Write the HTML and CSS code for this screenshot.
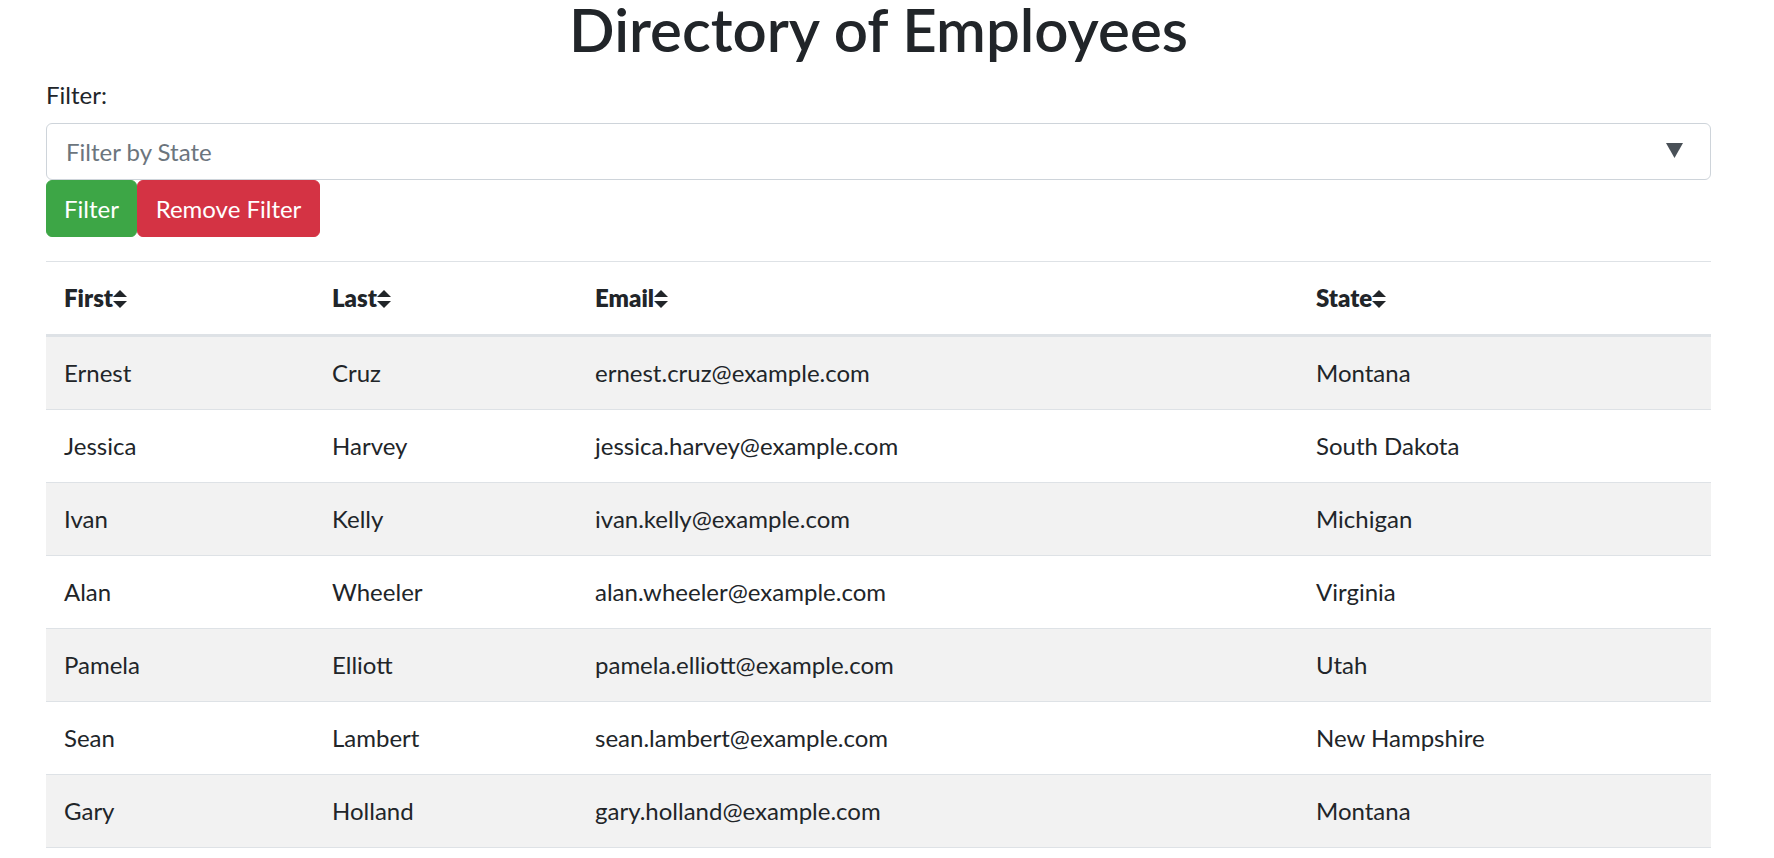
FILE: index.html
```html
<!DOCTYPE html>
<html lang="en">
<head>
<meta charset="utf-8">
<title>Directory of Employees</title>
<link rel="stylesheet" href="styles.css">
</head>
<body>
<div class="container">
  <h1 class="title">Directory of Employees</h1>
  <label class="filter-label">Filter:</label>
  <div class="select">
    <span class="placeholder">Filter by State</span>
    <svg class="caret" width="17" height="15" viewBox="0 0 17 15"><polygon points="0,0 17,0 8.5,15" fill="#495057"/></svg>
  </div>
  <div class="btn-row">
    <button class="btn btn-success">Filter</button>
    <button class="btn btn-danger">Remove Filter</button>
  </div>
  <table class="table">
    <colgroup>
      <col class="c1"><col class="c2"><col class="c3"><col class="c4">
    </colgroup>
    <thead>
      <tr>
        <th>First<svg class="sort" width="14" height="18" viewBox="0 0 14 18"><polygon points="7,0 14,7 0,7" fill="#212529"/><polygon points="0,11 14,11 7,18" fill="#212529"/></svg></th>
        <th>Last<svg class="sort" width="14" height="18" viewBox="0 0 14 18"><polygon points="7,0 14,7 0,7" fill="#212529"/><polygon points="0,11 14,11 7,18" fill="#212529"/></svg></th>
        <th>Email<svg class="sort" width="14" height="18" viewBox="0 0 14 18"><polygon points="7,0 14,7 0,7" fill="#212529"/><polygon points="0,11 14,11 7,18" fill="#212529"/></svg></th>
        <th>State<svg class="sort" width="14" height="18" viewBox="0 0 14 18"><polygon points="7,0 14,7 0,7" fill="#212529"/><polygon points="0,11 14,11 7,18" fill="#212529"/></svg></th>
      </tr>
    </thead>
    <tbody>
      <tr><td>Ernest</td><td>Cruz</td><td>ernest.cruz@example.com</td><td>Montana</td></tr>
      <tr><td>Jessica</td><td>Harvey</td><td>jessica.harvey@example.com</td><td>South Dakota</td></tr>
      <tr><td>Ivan</td><td>Kelly</td><td>ivan.kelly@example.com</td><td>Michigan</td></tr>
      <tr><td>Alan</td><td>Wheeler</td><td>alan.wheeler@example.com</td><td>Virginia</td></tr>
      <tr><td>Pamela</td><td>Elliott</td><td>pamela.elliott@example.com</td><td>Utah</td></tr>
      <tr><td>Sean</td><td>Lambert</td><td>sean.lambert@example.com</td><td>New Hampshire</td></tr>
      <tr><td>Gary</td><td>Holland</td><td>gary.holland@example.com</td><td>Montana</td></tr>
    </tbody>
  </table>
</div>
</body>
</html>
```
FILE: styles.css
```css
html, body {
  margin: 0;
  padding: 0;
  background: #fff;
}
body {
  font-family: "Lato", "Open Sans", sans-serif;
  font-size: 24px;
  line-height: 36px;
  color: #212529;
}
.container {
  width: 1665px;
  margin-left: 46px;
}
.title {
  margin: 0 0 19px;
  font-size: 60px;
  line-height: 58px;
  font-weight: 600;
  text-align: center;
}
.filter-label {
  display: block;
  margin-bottom: 10px;
}
.select {
  box-sizing: border-box;
  height: 57px;
  border: 1px solid #ced4da;
  border-radius: 6px;
  padding: 0 27px 0 19px;
  display: flex;
  align-items: center;
  justify-content: space-between;
}
.placeholder {
  color: #6c757d;
}
.caret {
  display: block;
  margin-top: -2px;
}
.btn-row {
  display: flex;
}
.btn {
  box-sizing: border-box;
  font-family: inherit;
  font-size: 24px;
  line-height: 36px;
  height: 57px;
  padding: 9px 0;
  border: 1px solid transparent;
  border-radius: 6px;
  color: #fff;
  text-align: center;
  white-space: nowrap;
  cursor: pointer;
}
.btn-success {
  background: #3da646;
  border-color: #3da646;
  width: 91px;
}
.btn-danger {
  background: #d43344;
  border-color: #d43344;
  width: 183px;
}
.table {
  width: 1665px;
  margin-top: 24px;
  border-collapse: collapse;
  table-layout: fixed;
  border-bottom: 1px solid #dee2e6;
}
.c1 { width: 268px; }
.c2 { width: 263px; }
.c3 { width: 721px; }
.c4 { width: 413px; }
.table th,
.table td {
  padding: 18px;
  text-align: left;
  vertical-align: top;
  border-top: 1px solid #dee2e6;
}
.table th {
  font-weight: 800;
  border-bottom: 3px solid #dee2e6;
  white-space: nowrap;
}
.sort {
  vertical-align: -1px;
}
.table tbody tr:nth-child(odd) {
  background: #f2f2f2;
}
```
